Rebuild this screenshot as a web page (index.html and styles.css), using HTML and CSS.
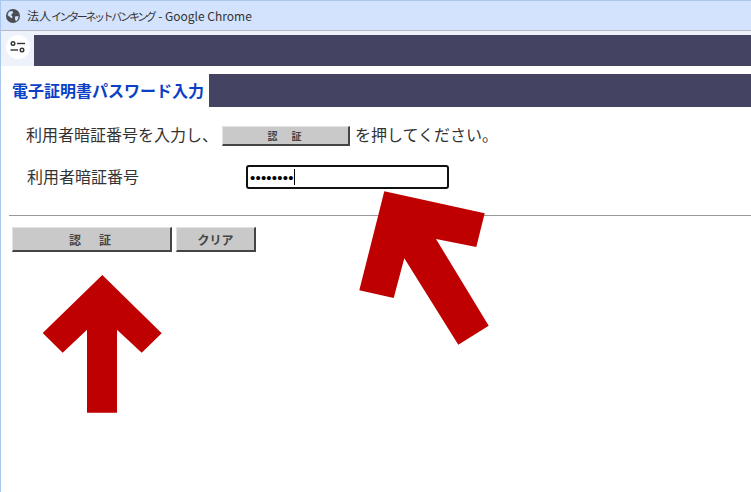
FILE: index.html
```html
<!DOCTYPE html>
<html lang="ja">
<head>
<meta charset="utf-8">
<title>法人インターネットバンキング</title>
<link rel="stylesheet" href="styles.css">
</head>
<body>
<div class="window">
  <header class="titlebar">
    <svg class="globe" viewBox="0 0 14 14" width="14" height="14">
      <circle cx="7" cy="7" r="7" fill="#4a4d55"/>
      <path d="M3 2.5 L6.5 2 L7 4 L5 6 L6.5 7.5 L6 9.5 L4 8 L1.5 6 Z M9 7.5 L12.5 7 L12 10 L10 12.5 L9 10 Z" fill="#d3e3fd"/>
    </svg>
    <span class="title"><span class="title-kanji">法人</span><span class="title-kana">インターネットバンキング</span> - Google Chrome</span>
  </header>
  <div class="toolbar">
    <span class="site-icon">
      <svg viewBox="0 0 18 14" width="18" height="14" fill="none" stroke="#333" stroke-width="1.4">
        <circle cx="4" cy="3.5" r="1.8"/>
        <path d="M8 3.5H16"/>
        <circle cx="13" cy="10" r="1.8"/>
        <path d="M1.5 10H9"/>
      </svg>
    </span>
    <div class="toolbar-band"></div>
  </div>
  <main class="page">
    <div class="heading-row">
      <h1 class="heading">電子証明書パスワード入力</h1>
      <div class="heading-band"></div>
    </div>
    <p class="instruction">
      <span class="instruction-lead">利用者暗証番号を入力し、</span>
      <button class="btn btn-inline" type="button">認　証</button>
      <span class="instruction-tail">を押してください。</span>
    </p>
    <div class="field-row">
      <label class="field-label" for="pw">利用者暗証番号</label>
      <div class="field-input" id="pw"><span class="dots">••••••••</span><span class="caret"></span></div>
    </div>
    <hr class="rule">
    <div class="actions">
      <button class="btn btn-auth" type="button">認　証</button>
      <button class="btn btn-clear" type="button">クリア</button>
    </div>
  </main>
  <svg class="arrows" viewBox="0 0 751 492" width="751" height="492">
    <polygon fill="#bf0000" points="384.3,191.3 484.7,213.3 476.3,247 436,239 488.7,325.7 458.3,344.7 404.3,258.3 393.7,298 359.3,290.3"/>
    <polygon fill="#bf0000" points="102.3,275 161.7,333.3 141.7,352.7 117,329.7 117,412.7 87,412.7 87,329.7 62.7,352.7 42.7,333"/>
  </svg>
</div>
</body>
</html>
```
FILE: styles.css
```css
* { box-sizing: border-box; }
html, body { margin: 0; height: 100%; background: #fff; overflow: hidden; }
body { font-family: "Noto Sans CJK JP", "Noto Sans", sans-serif; color: #333; }
.window {
  position: relative;
  height: 492px;
  border-top: 1px solid #a9c6ec;
  border-left: 1px solid #a9c6ec;
}
.titlebar {
  height: 30px;
  background: #d3e3fd;
  border-bottom: 1px solid #b4b9c2;
  display: flex;
  align-items: center;
  padding-left: 5px;
  gap: 7px;
}
.globe { flex: none; }
.title { font-size: 12px; color: #333; white-space: nowrap; }
.title-kana { font-size: 11px; letter-spacing: -2.4px; margin-right: 1px; }
.toolbar {
  height: 35px;
  background: #eef3fb;
  padding-top: 4px;
  display: flex;
}
.site-icon {
  width: 24px;
  height: 24px;
  margin-left: 5px;
  margin-right: 4px;
  border-radius: 50%;
  background: #fff;
  display: flex;
  align-items: center;
  justify-content: center;
  flex: none;
}
.toolbar-band { flex: 1; background: #444462; }
.page { padding: 8px 0 0 8px; }
.heading-row { display: flex; height: 33px; }
.heading {
  margin: 0;
  padding: 0 5px 0 3px;
  font-size: 16px;
  font-weight: 700;
  line-height: 33px;
  color: #0b3fc6;
  white-space: nowrap;
}
.heading-band { flex: 1; background: #444462; }
.instruction {
  margin: 19px 0 0 17px;
  height: 20px;
  display: flex;
  align-items: center;
  font-size: 16px;
  line-height: 20px;
  white-space: nowrap;
}
.instruction-lead { width: 196px; padding-bottom: 4px; }
.instruction-tail { margin-left: 5px; padding-bottom: 4px; }
.btn {
  background: #c9c9c9;
  border: 1px solid;
  border-color: #e2e2e2 #444 #444 #e2e2e2;
  border-width: 1px 2px 2px 1px;
  padding: 0;
  font-family: inherit;
  font-weight: 700;
  color: #444;
  flex: none;
}
.btn-inline { width: 128px; height: 20px; font-size: 10px; line-height: 16px; letter-spacing: 2px; }
.field-row {
  margin: 19px 0 0 18px;
  height: 24px;
  display: flex;
  align-items: center;
}
.field-label { width: 219px; font-size: 16px; white-space: nowrap; padding-bottom: 2px; }
.field-input {
  width: 203px;
  height: 24px;
  border: 2px solid #111;
  border-radius: 3px;
  padding-left: 2px;
  display: flex;
  align-items: center;
  color: #000;
  font-size: 15px;
  font-family: "Liberation Sans", sans-serif;
}
.dots { letter-spacing: 0.2px; }
.caret { width: 1px; height: 16px; background: #000; }
.rule { margin: 26px 0 0 0; border: 0; height: 1px; background: #999; }
.actions { margin: 11px 0 0 3px; display: flex; gap: 4px; }
.btn-auth { width: 160px; height: 25px; font-size: 12px; letter-spacing: 3px; }
.btn-clear { width: 80px; height: 25px; font-size: 12px; }
.arrows { position: absolute; left: -1px; top: -1px; pointer-events: none; }
```
